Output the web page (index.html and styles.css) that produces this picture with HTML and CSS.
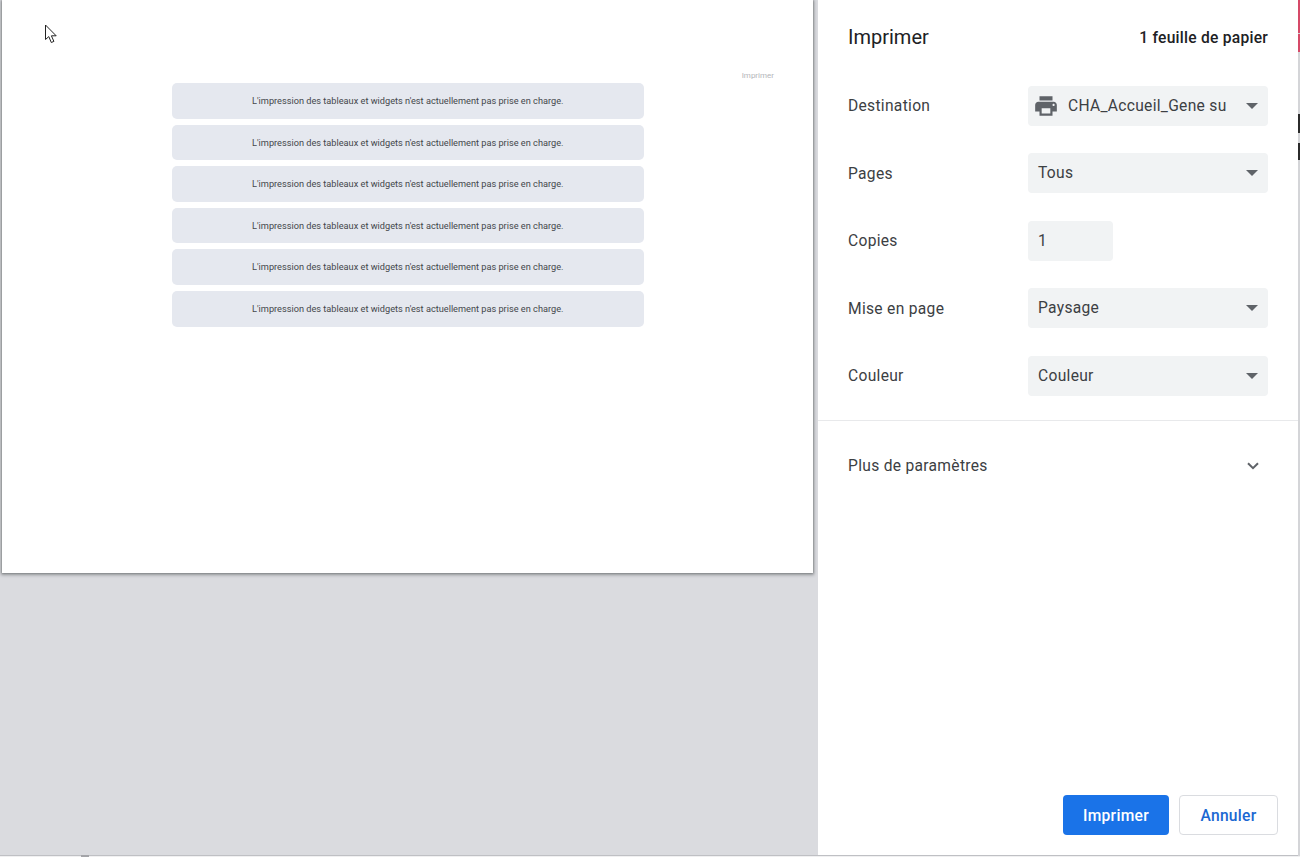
FILE: index.html
```html
<!DOCTYPE html>
<html lang="fr">
<head>
<meta charset="utf-8">
<title>Imprimer</title>
<link rel="stylesheet" href="styles.css">
</head>
<body>
<div class="screen">
  <main class="preview">
    <div class="sheet">
      <svg class="cursor" width="14" height="20" viewBox="0 0 14 20"><path d="M1.500 1V15.500L4.800 12.600L7.300 18.500L9.900 17.400L7.400 11.800H12.200Z" fill="#fff" stroke="#222" stroke-width="1"/></svg>
      <div class="sheet-head">Imprimer</div>
      <div class="notices">
        <div class="notice">L'impression des tableaux et widgets n'est actuellement pas prise en charge.</div>
        <div class="notice">L'impression des tableaux et widgets n'est actuellement pas prise en charge.</div>
        <div class="notice">L'impression des tableaux et widgets n'est actuellement pas prise en charge.</div>
        <div class="notice">L'impression des tableaux et widgets n'est actuellement pas prise en charge.</div>
        <div class="notice">L'impression des tableaux et widgets n'est actuellement pas prise en charge.</div>
        <div class="notice">L'impression des tableaux et widgets n'est actuellement pas prise en charge.</div>
      </div>
    </div>
    <i class="tick"></i>
  </main>
  <aside class="panel">
    <header class="panel-head">
      <h1>Imprimer</h1>
      <strong>1 feuille de papier</strong>
    </header>
    <div class="settings">
      <div class="row">
        <label>Destination</label>
        <div class="select">
          <svg class="printer" width="26" height="26" viewBox="0 0 24 24"><path fill="#5f6368" d="M19 8H5c-1.660 0-3 1.340-3 3v6h4v4h12v-4h4v-6c0-1.660-1.340-3-3-3zm-3 11H8v-5h8v5zm3-7c-.550 0-1-.450-1-1s.450-1 1-1 1 .450 1 1-.450 1-1 1zm-1-9H6v4h12V3z"/></svg>
          <span>CHA_Accueil_Gene su</span>
        </div>
      </div>
      <div class="row"><label>Pages</label><div class="select"><span>Tous</span></div></div>
      <div class="row"><label>Copies</label><div class="select copies"><span>1</span></div></div>
      <div class="row"><label>Mise en page</label><div class="select"><span>Paysage</span></div></div>
      <div class="row"><label>Couleur</label><div class="select"><span>Couleur</span></div></div>
    </div>
    <div class="more">
      <span>Plus de paramètres</span>
      <svg width="12" height="8" viewBox="0 0 12 8"><path d="M1 1.200L6 6.200L11 1.200" fill="none" stroke="#5f6368" stroke-width="2"/></svg>
    </div>
    <footer class="actions">
      <button class="btn primary">Imprimer</button>
      <button class="btn secondary">Annuler</button>
    </footer>
  </aside>
  <div class="edge">
    <i class="edge-red"></i>
    <i class="edge-red short"></i>
    <i class="edge-dark"></i>
    <i class="edge-dark low"></i>
  </div>
</div>
</body>
</html>
```
FILE: styles.css
```css
* { box-sizing: border-box; }
html, body { margin: 0; height: 100%; overflow: hidden; }
body { font-family: Roboto, "Liberation Sans", sans-serif; background: #f0f0f1; color: #202124; }
.screen { display: flex; width: 1300px; height: 857px; }

.preview { position: relative; width: 818px; height: 856px; flex: none; background: #dadbdf; padding-left: 2px; border-bottom: 1px solid #bfc0c4; }
.tick { position: absolute; left: 81px; top: 855px; width: 8px; height: 2px; background: #a3a4a8; }
.sheet { position: relative; width: 811px; height: 573px; background: #fff; box-shadow: 0 1px 3px 1px rgba(60,64,67,.45), 0 0 2px rgba(60,64,67,.45); padding-top: 71px; }
.cursor { position: absolute; left: 42px; top: 24px; }
.sheet-head { height: 12px; padding-right: 39px; text-align: right; font-size: 8px; line-height: 10px; color: #b4b6ba; }
.notices { display: flex; flex-direction: column; gap: 6px; width: 472.500px; margin-left: 169.500px; }
.notice { height: 35.600px; background: #e5e8ef; border-radius: 5px; text-align: center; font-size: 9.200px; line-height: 35px; color: #44474b; }

.panel { position: relative; width: 480px; flex: none; height: 856px; background: #fff; border-bottom: 1px solid #bfc0c4; display: flex; flex-direction: column; }
.panel-head { display: flex; justify-content: space-between; align-items: center; padding: 25px 30px 36.750px; height: 85.750px; }
.panel-head h1 { margin: 0; font-size: 20px; font-weight: 400; line-height: 24px; color: #202124; }
.panel-head strong { padding-top: 2px; font-size: 15.600px; font-weight: 500; letter-spacing: .25px; color: #202124; }
.settings { display: flex; flex-direction: column; gap: 27.500px; padding: 0 30px 24.250px; border-bottom: 1px solid #e8e9eb; }
.row { display: flex; align-items: center; height: 40px; }
.row label { width: 180px; padding-top: 1px; font-size: 15.600px; letter-spacing: .3px; color: #3c4043; }
.select { position: relative; display: flex; align-items: center; gap: 9px; width: 240px; height: 40px; padding-left: 10px; background: #f1f3f4; border-radius: 4px; font-size: 15.600px; letter-spacing: .3px; color: #3c4043; }
.select::after { content: ""; position: absolute; right: 10px; top: 17px; border-left: 6px solid transparent; border-right: 6px solid transparent; border-top: 6px solid #5f6368; }
.select.copies { width: 85px; }
.select.copies::after { display: none; }
.printer { margin-left: -5px; flex: none; }
.more { display: flex; align-items: center; justify-content: space-between; padding: 0 39px 0 30px; height: 90px; font-size: 15.600px; letter-spacing: .3px; color: #3c4043; }
.actions { margin-top: auto; display: flex; justify-content: flex-end; gap: 10px; padding: 0 20px 20px 0; }
.btn { height: 40px; padding-top: 2px; border-radius: 4px; font-family: inherit; font-size: 15.600px; font-weight: 500; letter-spacing: .3px; }
.btn.primary { width: 106px; background: #1a73e8; color: #fff; border: 0; }
.btn.secondary { width: 99px; background: #fff; color: #1a67d2; border: 1px solid #dadce0; }

.edge { width: 2px; flex: none; display: flex; flex-direction: column; background: #d4d5d8; height: 856px; }
.edge-red { display: block; height: 33px; background: #d64a68; }
.edge-red.short { height: 18px; margin-top: 1px; }
.edge-dark { display: block; height: 19px; margin-top: 62px; background: #2b2b2b; }
.edge-dark.low { height: 17px; margin-top: 10px; }
```
